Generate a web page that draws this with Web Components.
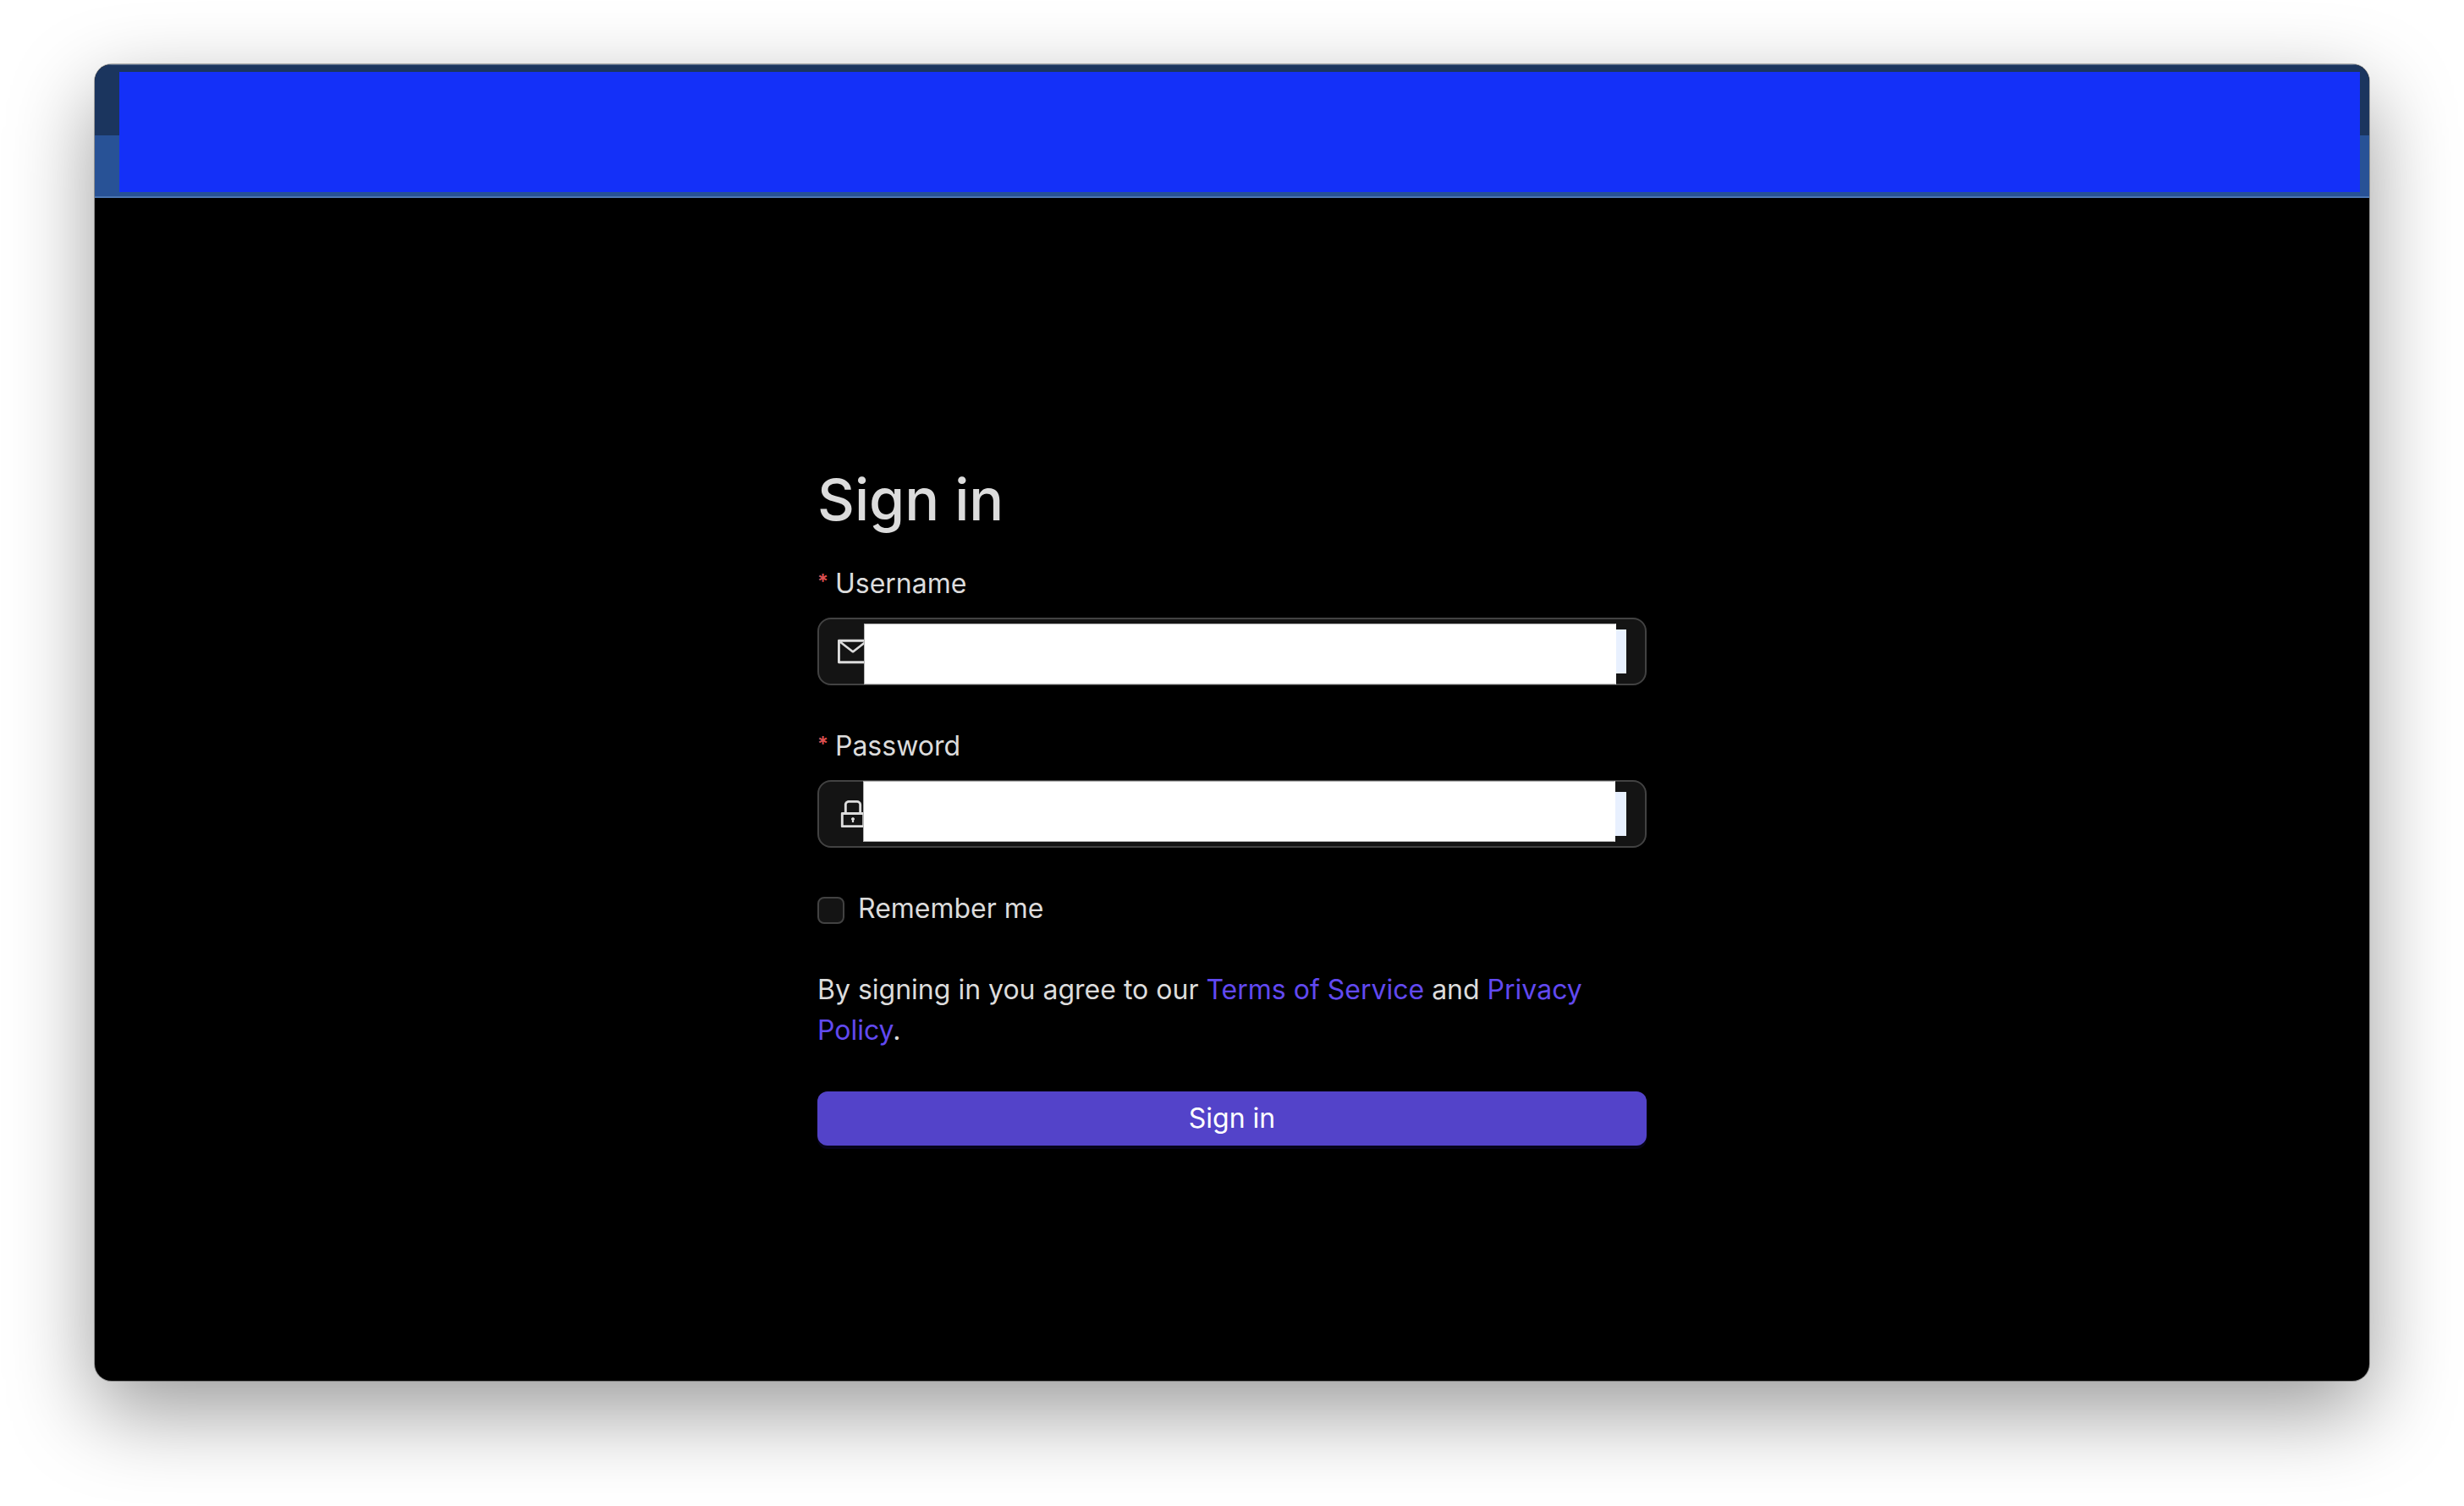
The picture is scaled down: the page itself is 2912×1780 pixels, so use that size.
<!DOCTYPE html>
<html lang="en">
<head>
<meta charset="utf-8">
<title>Sign in</title>
<style>
  html { height: 100%; background: #fff; }
  body { margin: 0; min-height: 100%; display: flex; font-family: Inter, "Liberation Sans", sans-serif; font-size: 32px; line-height: 48px; color: #dcdcdc; }
</style>
</head>
<body>
<app-window>
  <browser-chrome slot="chrome"></browser-chrome>
  <sign-in-form></sign-in-form>
</app-window>

<script>
  class Base extends HTMLElement {
    constructor() {
      super();
      this.attachShadow({ mode: "open" }).innerHTML = this.render();
    }
  }

  // Desktop window with rounded corners and a soft drop shadow
  customElements.define("app-window", class extends Base {
    render() {
      return `<style>
        :host { display: flex; flex: 1; box-sizing: border-box; min-height: 100vh; padding: 76px 112px 148px; }
        .window { flex: 1; display: flex; flex-direction: column; overflow: hidden; border-radius: 20px; background: #000;
          box-shadow: 0 0 0 1px rgba(0,0,0,.3), 0 36px 100px rgba(0,0,0,.4); }
        main { flex: 1; display: flex; justify-content: center; align-items: center; }
      </style>
      <div class="window"><slot name="chrome"></slot><main><slot></slot></main></div>`;
    }
  });

  // Tab strip and toolbar, under a solid blue cover
  customElements.define("browser-chrome", class extends Base {
    render() {
      return `<style>
        :host { display: block; position: relative; }
        .tabs { height: 83px; background: #1b355e; border-top: 1px solid #5a6f8e; }
        .bar { height: 72px; background: #285296; border-bottom: 2px solid #4b76b2; }
        .cover { position: absolute; inset: 9px 11px 7px 29px; background: #1430f8; }
      </style>
      <div class="tabs"></div><div class="bar"></div><div class="cover"></div>`;
    }
  });

  const ICONS = {
    mail: "M928 160H96c-17.7 0-32 14.3-32 32v640c0 17.7 14.3 32 32 32h832c17.7 0 32-14.3 32-32V192c0-17.7-14.3-32-32-32zm-40 110.8V792H136V270.8l-27.6-21.5 39.3-50.5 42.8 33.3h643.1l42.8-33.3 39.3 50.5-27.7 21.5zM833.6 232L512 482 190.4 232l-42.8-33.3-39.3 50.5 27.6 21.5 341.6 265.6a55.99 55.99 0 0068.7 0L888 270.8l27.6-21.5-39.3-50.5-42.7 33.2z",
    lock: "M832 464h-68V240c0-70.7-57.3-128-128-128H388c-70.7 0-128 57.3-128 128v224h-68c-17.7 0-32 14.3-32 32v384c0 17.7 14.3 32 32 32h640c17.7 0 32-14.3 32-32V496c0-17.7-14.3-32-32-32zM332 240c0-30.9 25.1-56 56-56h248c30.9 0 56 25.1 56 56v224H332V240zm460 600H232V536h560v304zM484 701v53c0 4.4 3.6 8 8 8h40c4.4 0 8-3.6 8-8v-53a48.1 48.1 0 10-56 0z"
  };

  // Required field: label, leading icon, autofilled input and a redaction block
  customElements.define("form-field", class extends Base {
    render() {
      const type = this.getAttribute("type");
      const icon = this.getAttribute("icon");
      return `<style>
        :host { display: flex; flex-direction: column; gap: 16px; }
        label { display: flex; gap: 8px; }
        label span { color: #dc5050; font-size: 24px; line-height: 44px; font-weight: 600; }
        .box { position: relative; display: flex; align-items: center; gap: 8px; box-sizing: border-box; height: 80px; padding: 0 22px;
          border: 2px solid #424242; border-radius: 16px; background: #141414; }
        svg { width: 36px; height: 36px; fill: currentColor; flex: none; }
        input { flex: 1; min-width: 0; height: 52px; box-sizing: border-box; margin: 0; padding: 0; border: 0; border-radius: 0; outline: 0; background: #e8f0fe; font: inherit; color: #000; }
        .mask { position: absolute; inset: var(--mask-inset); box-sizing: border-box; background: #fff; border: 1px solid #b4b4b4; border-right-color: #fff; }
      </style>
      <label for="field"><span>*</span><slot></slot></label>
      <div class="box">
        <svg viewBox="64 64 896 896" aria-hidden="true"><path d="${ICONS[icon]}"/></svg>
        <input id="field" type="${type}" required>
        <div class="mask"></div>
      </div>`;
    }
  });

  customElements.define("check-option", class extends Base {
    render() {
      return `<style>
        :host { display: flex; }
        label { display: flex; align-items: center; gap: 16px; }
        input { appearance: none; box-sizing: border-box; width: 32px; height: 32px; margin: 4px 0 0; border: 2px solid #424242; border-radius: 8px; background: #141414; }
      </style>
      <label><input type="checkbox"><slot></slot></label>`;
    }
  });

  customElements.define("primary-button", class extends Base {
    render() {
      return `<style>
        :host { display: block; }
        button { display: block; width: 100%; height: 64px; padding: 0; border: 0; border-radius: 12px; background: #5343c9; color: #fff;
          font: inherit; line-height: 64px; box-shadow: 0 4px 0 #06041a; }
      </style>
      <button type="submit"><slot></slot></button>`;
    }
  });

  customElements.define("sign-in-form", class extends Base {
    render() {
      return `<style>
        :host { display: block; width: 100%; max-width: 980px; }
        h1 { margin: 0; padding: 34px 0 32px; font-size: 68px; line-height: 88px; font-weight: 500; }
        form { display: flex; flex-direction: column; gap: 48px; margin: 0; }
        form-field[icon=mail] { --mask-inset: 5px 34px -1px 53px; }
        form-field[icon=lock] { --mask-inset: -1px 35px 5px 52px; }
        p { margin: 0; }
        a { color: #6149f0; text-decoration: none; }
      </style>
      <h1>Sign in</h1>
      <form>
        <form-field type="text" icon="mail">Username</form-field>
        <form-field type="password" icon="lock">Password</form-field>
        <check-option>Remember me</check-option>
        <p>By signing in you agree to our <a href="#terms">Terms of Service</a> and <a href="#privacy">Privacy Policy</a>.</p>
        <primary-button>Sign in</primary-button>
      </form>`;
    }
  });
</script>
</body>
</html>
